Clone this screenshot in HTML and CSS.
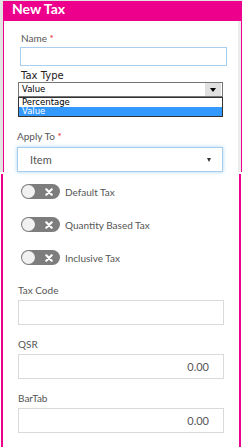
FILE: index.html
```html
<!DOCTYPE html>
<html lang="en">
<head>
<meta charset="utf-8">
<title>New Tax</title>
<link rel="stylesheet" href="styles.css">
</head>
<body>
<div class="top">
  <div class="panel">
    <div class="panel-head"><span class="title">New Tax</span></div>
    <div class="panel-body">
      <div class="name-field">
        <div class="lbl name-lbl">Name <span class="req">*</span></div>
        <div class="name-input"></div>
      </div>
      <div class="tax-type">
        <div class="sys-label">Tax Type</div>
        <div class="sys-select"><span>Value</span><span class="sys-btn"><i class="tri"></i></span></div>
        <ul class="sys-list">
          <li>Percentage</li>
          <li class="sel">Value</li>
        </ul>
      </div>
      <div class="apply">
        <div class="lbl">Apply To <span class="req">*</span></div>
        <div class="select"><span>Item</span><i class="caret"></i></div>
      </div>
    </div>
  </div>
</div>
<div class="bottom">
  <div class="toggles">
    <div class="toggle-row">
      <span class="switch"><span class="knob"></span><svg class="x" width="8" height="8" viewBox="0 0 8 8"><path d="M1.3 1.3L6.7 6.7M6.7 1.3L1.3 6.7"/></svg></span>
      <span class="lbl">Default Tax</span>
    </div>
    <div class="toggle-row">
      <span class="switch"><span class="knob"></span><svg class="x" width="8" height="8" viewBox="0 0 8 8"><path d="M1.3 1.3L6.7 6.7M6.7 1.3L1.3 6.7"/></svg></span>
      <span class="lbl">Quantity Based Tax</span>
    </div>
    <div class="toggle-row">
      <span class="switch"><span class="knob"></span><svg class="x" width="8" height="8" viewBox="0 0 8 8"><path d="M1.3 1.3L6.7 6.7M6.7 1.3L1.3 6.7"/></svg></span>
      <span class="lbl">Inclusive Tax</span>
    </div>
  </div>
  <div class="field first">
    <div class="lbl">Tax Code</div>
    <input class="inp" type="text" value="">
  </div>
  <div class="field">
    <div class="lbl">QSR</div>
    <input class="inp num" type="text" value="0.00">
  </div>
  <div class="field">
    <div class="lbl">BarTab</div>
    <input class="inp num" type="text" value="0.00">
  </div>
</div>
</body>
</html>
```
FILE: styles.css
```css
* { box-sizing: border-box; }
html, body { margin: 0; padding: 0; background: #fff; }
body {
  width: 244px;
  height: 447px;
  overflow: hidden;
  font-family: Lato, "Open Sans", sans-serif;
}

.top {
  border-left: 3px solid #e3e3e3;
  border-top: 1px solid #e3e3e3;
  margin-right: 2px;
}
.panel {
  border-left: 1px solid #ec008c;
  border-right: 1px solid #ec008c;
}
.panel-head {
  background: #ec008c;
  height: 20px;
  padding-left: 8px;
}
.title {
  display: block;
  color: #fff;
  font: bold 14px/15px Lato, sans-serif;
}
.panel-body {
  border-right: 3px solid #ebebeb;
  padding: 11px 0 0 13px;
}

.lbl {
  font: 10px/12px Lato, sans-serif;
  color: #555;
}
.req { color: #e0252b; }

.name-lbl { margin-left: 4px; }
.name-input {
  margin: 3px 0 0 3px;
  width: 207px;
  height: 19px;
  border: 1px solid #a9cff0;
}

.tax-type { margin-top: 4px; }
.sys-label {
  font: 10px/12px "DejaVu Sans", sans-serif;
  color: #222;
  margin-left: 4px;
}
.sys-select {
  margin-left: 1px;
  width: 205px;
  height: 15px;
  border: 1px solid #767676;
  display: flex;
  align-items: center;
  padding-left: 3px;
  font: 8.5px/9px "DejaVu Sans", sans-serif;
  color: #000;
}
.sys-btn {
  margin-left: auto;
  margin-right: 1px;
  width: 16px;
  height: 13px;
  background: #e0e0e0;
  display: flex;
  align-items: center;
  justify-content: center;
}
.tri {
  width: 0;
  height: 0;
  border-left: 3.5px solid transparent;
  border-right: 3.5px solid transparent;
  border-top: 4px solid #000;
}
.sys-list {
  margin: 0 0 0 1px;
  padding: 0;
  list-style: none;
  width: 205px;
  border: 1px solid #333;
  font: 8.5px/9px "DejaVu Sans", sans-serif;
  color: #000;
}
.sys-list li {
  height: 9px;
  padding-left: 3px;
}
.sys-list .sel {
  background: #3399ff;
  color: #fff;
}

.apply { margin-top: 13px; }
.select {
  margin-top: 5px;
  margin-bottom: -9px;
  width: 206px;
  height: 25px;
  border: 1px solid #a3cbee;
  box-shadow: 0 0 4px rgba(102, 175, 233, 0.5);
  display: flex;
  align-items: center;
  justify-content: space-between;
  padding: 0 11px 0 12px;
  background: #fff;
  font: 11px Lato, sans-serif;
  color: #555;
}
.caret {
  width: 0;
  height: 0;
  border-left: 2.5px solid transparent;
  border-right: 2.5px solid transparent;
  border-top: 4px solid #333;
}

.bottom {
  margin: 11px 3px 0 1px;
  height: 273px;
  border-left: 2px solid #ec008c;
  border-right: 2px solid #ec008c;
  padding: 10px 0 0 15px;
}
.toggles {
  display: flex;
  flex-direction: column;
  gap: 18px;
}
.toggle-row {
  display: flex;
  align-items: center;
  gap: 5px;
  margin-left: 3px;
  height: 15px;
}
.switch {
  width: 39px;
  height: 15px;
  border-radius: 8px;
  background: #7d7d7d;
  display: flex;
  align-items: center;
  padding: 0 1px;
}
.knob {
  width: 13px;
  height: 13px;
  border-radius: 50%;
  background: #f1f1f1;
}
.x {
  margin-left: 10px;
  stroke: #fff;
  stroke-width: 2.2;
  stroke-linecap: round;
  fill: none;
}

.field { margin-top: 13px; }
.field.first { margin-top: 19px; }
.inp {
  display: block;
  margin: 4px 0 0 0;
  width: 206px;
  height: 25px;
  border: 1px solid #d9d9d9;
  border-radius: 0;
  padding: 0 14px 0 8px;
  font: 11px Lato, sans-serif;
  color: #555;
  background: #fff;
  outline: none;
}
.inp.num { text-align: right; }
```
